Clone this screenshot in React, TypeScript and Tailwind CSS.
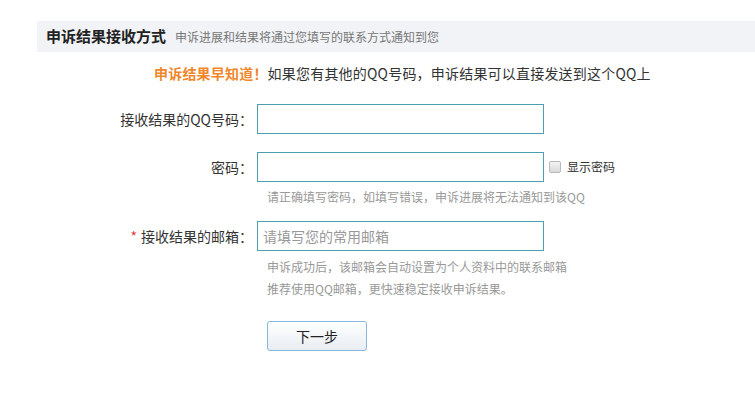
import React from 'react';

const font = { fontFamily: '"Microsoft YaHei", "Noto Sans CJK SC", sans-serif' };

const Label: React.FC<{ text: string; required?: boolean }> = ({ text, required }) => (
  <div className="w-[257px] shrink-0 pr-[4px] text-right text-[14px] text-[#333]">
    {required && <span className="mr-[4px] text-[#e4393c]">*</span>}
    {text}
  </div>
);

export default function App() {
  return (
    <div className="h-[394px] w-[755px] bg-white" style={font}>
      <div className="pt-[21px] pl-[37px]">
        {/* header bar */}
        <div className="flex h-[31px] items-center bg-[#f1f3f6] pl-[9px]">
          <span className="text-[15px] font-bold text-[#222]">申诉结果接收方式</span>
          <span className="ml-[9px] text-[12px] text-[#777]">申诉进展和结果将通过您填写的联系方式通知到您</span>
        </div>
      </div>

      <div className="mt-[11px] pl-[154px] text-[14px] leading-[20px] tracking-[0.2px] text-[#333]">
        <span className="font-bold text-[#f0872a]">申诉结果早知道！</span>
        如果您有其他的QQ号码，申诉结果可以直接发送到这个QQ上
      </div>

      <div className="mt-[21px] flex flex-col">
        <div className="flex h-[30px] items-center">
          <Label text="接收结果的QQ号码：" />
          <input className="h-[30px] w-[287px] border border-[#4b9fae] px-[5px] text-[14px] outline-none" />
        </div>

        <div className="mt-[18px] flex h-[30px] items-center">
          <Label text="密码：" />
          <input
            type="password"
            className="h-[30px] w-[287px] border border-[#4b9fae] px-[5px] text-[14px] outline-none"
          />
          <span className="ml-[5px] flex items-center">
            <span className="h-[12px] w-[12px] rounded-[2px] border border-[#b8b8b8] bg-gradient-to-b from-[#f4f4f4] to-[#d9d9d9]" />
            <span className="ml-[6px] text-[12px] text-[#333]">显示密码</span>
          </span>
        </div>
        <div className="mt-[5px] pl-[267px] text-[12px] leading-[20px] text-[#999]">
          请正确填写密码，如填写错误，申诉进展将无法通知到该QQ
        </div>

        <div className="mt-[14px] flex h-[30px] items-center">
          <Label text="接收结果的邮箱：" required />
          <input
            placeholder="请填写您的常用邮箱"
            className="h-[30px] w-[287px] border border-[#4b9fae] px-[5px] text-[14px] outline-none placeholder:text-[#999]"
          />
        </div>
        <div className="mt-[5px] pl-[267px] text-[12px] leading-[22px] text-[#999]">
          <div>申诉成功后，该邮箱会自动设置为个人资料中的联系邮箱</div>
          <div>推荐使用QQ邮箱，更快速稳定接收申诉结果。</div>
        </div>

        <div className="mt-[21px] pl-[267px]">
          <button className="h-[30px] w-[100px] rounded-[3px] border border-[#86b6dc] bg-gradient-to-b from-[#ffffff] to-[#e8edf2] text-[14px] text-[#222]">
            下一步
          </button>
        </div>
      </div>
    </div>
  );
}
